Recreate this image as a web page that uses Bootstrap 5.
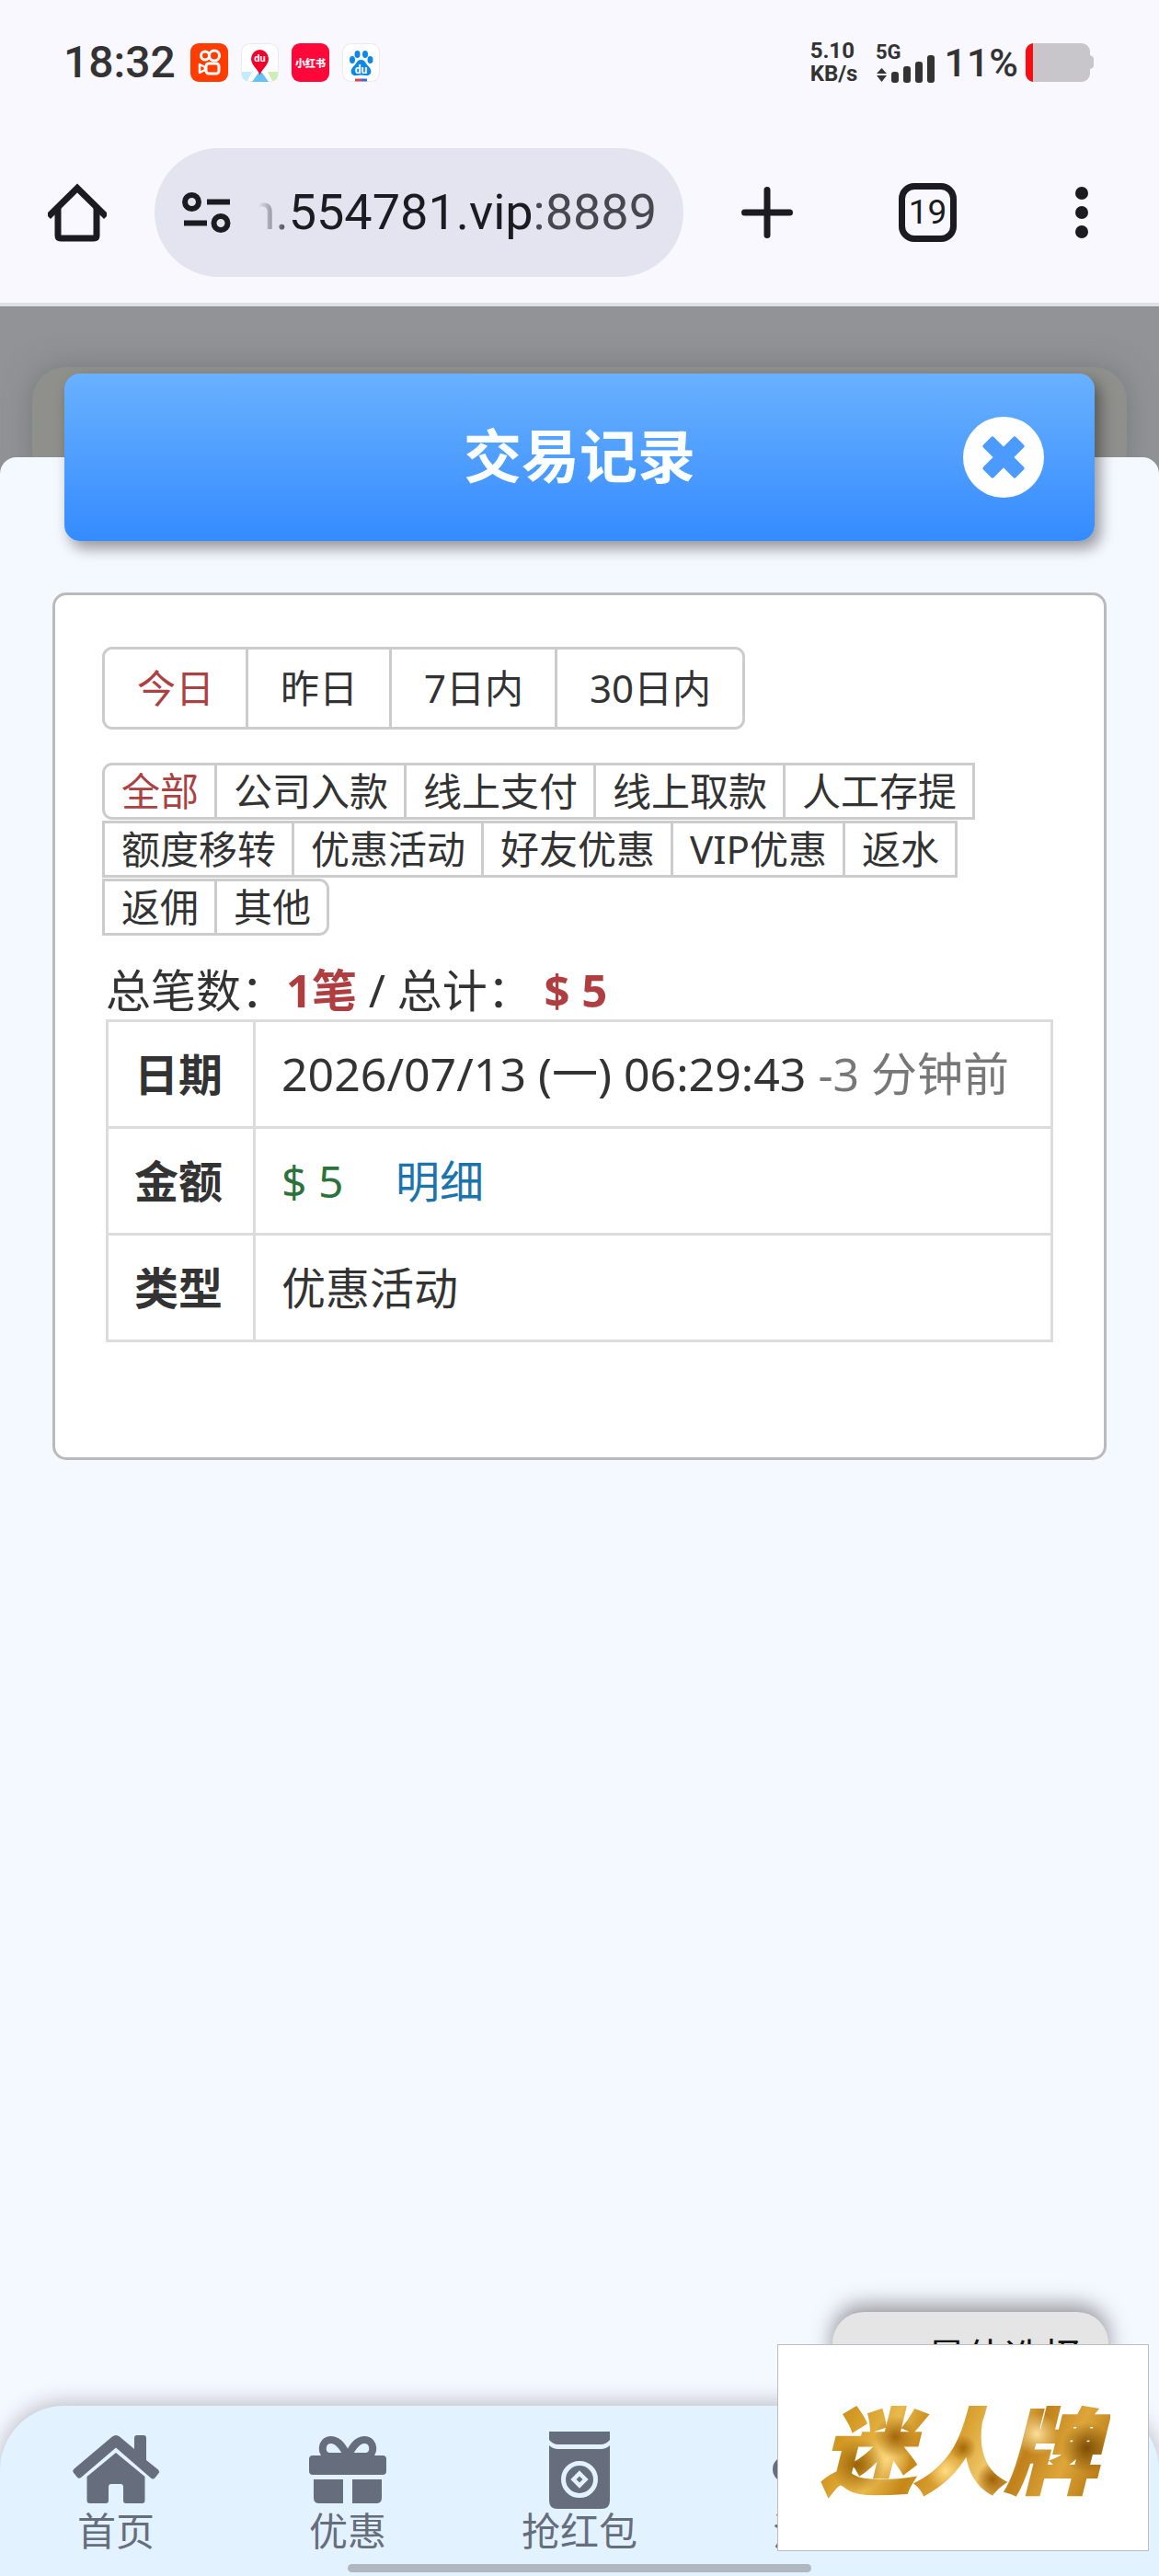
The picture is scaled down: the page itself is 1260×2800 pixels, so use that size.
<!DOCTYPE html>
<html lang="zh-CN">
<head>
<meta charset="utf-8">
<meta name="viewport" content="width=device-width, initial-scale=1">
<title>交易记录</title>
<link href="https://cdn.jsdelivr.net/npm/bootstrap@5.3.0/dist/css/bootstrap.min.css" rel="stylesheet">
<style>
  body { background: #f4f8ff; color: #333; font-family: "Noto Sans", "Noto Sans CJK SC", sans-serif; }
  svg { display: block; flex: none; }
  .chrome-area { background: #f9f8ff; border-bottom: 4px solid #e0dfe8; color: #1b1b21; }
  /* status bar */
  .status-bar { height: 136px; padding: 0 70px 0 69px; font-family: Roboto, "Noto Sans CJK SC", sans-serif; font-weight: 500; color: #333; }
  .clock { font-size: 48px; line-height: 48px; width: 138px; }
  .app-icons { gap: 14px; }
  .net-speed { font-size: 24px; line-height: 25px; font-weight: 700; }
  .battery-text { font-size: 43px; line-height: 48px; }
  /* browser toolbar */
  .tool-bar { padding: 25px 52px 28px; }
  .tool-bar .btn { width: 64px; height: 64px; }
  .address-pill { height: 140px; margin-left: 52px; padding: 0 29px 0 30px; border-radius: 70px; background: #e4e4f0; gap: 30px; min-width: 0; }
  .address-text { font-family: Roboto, sans-serif; font-size: 54px; line-height: 72px; color: #1b1b21; white-space: nowrap; -webkit-mask-image: linear-gradient(90deg, transparent, #000 40px); mask-image: linear-gradient(90deg, transparent, #000 40px); }
  .address-port { color: #474750; }
  .add-tab { margin-left: 59px; }
  .tab-count { margin-left: 111px; border: 7px solid #1b1b21; border-radius: 17px; font-family: Roboto, sans-serif; font-size: 37px; line-height: 48px; color: #1b1b21; }
  .more-menu { margin-left: 104px; }
  /* dimmed page and the sheet on top of it */
  .dimmed { background: #929397; }
  .dimmed-panel { top: 66px; left: 35px; right: 35px; height: 130px; border-radius: 36px; background: #8f8f8c; box-shadow: 0 0 32px rgba(90, 95, 100, .5); }
  .sheet { margin-top: 164px; border-radius: 18px 18px 0 0; background: #f4f8ff; }
  .banner { height: 182px; margin: -91px 70px 56px; padding: 0 55px; border-radius: 17px; background: linear-gradient(#69b1ff, #358bff); box-shadow: 6px 8px 16px rgba(0, 0, 0, .4); }
  .banner h1 { font-size: 63px; line-height: 72px; padding: 0 0 4px 88px; color: #fafeff; }
  /* record card */
  .record-card { margin: 0 57px; padding: 56px 51px 125px; border: 3px solid #b9babc; border-radius: 15px; }
  .seg { border: 3px solid #ccc; margin-right: -3px; background: #fff; color: #333; font-size: 42px; line-height: 56px; padding: 0 17px 0 18px; white-space: nowrap; }
  .seg.active { color: #ad4141; }
  .seg:first-child { border-radius: 11px 0 0 11px; }
  .seg:last-child { border-radius: 0 11px 11px 0; }
  .range-row .seg { padding: 14px 34px 14px 35px; }
  .type-row { margin-top: 36px; row-gap: 1px; }
  .summary { margin: 27px 4px 0; font-size: 49px; line-height: 64px; color: #333; }
  .summary strong { color: #b03e40; }
  .record-wrap { margin: 0 4px; }
  .record-table { font-size: 48px; line-height: 65px; color: #333; }
  .record-table th, .record-table td { border: 3px solid #dcdcdc; padding: 24px 28px; color: #333; }
  .record-table th { width: 160px; }
  .record-table .record-time { font-size: 50px; }
  .record-table .money { color: #2b733b; }
  .record-table .ago { color: #777; }
  .record-table a { color: #1c74ad; margin-left: 44px; }
  /* bottom navigation */
  .bottom-nav { border-radius: 70px 70px 0 0; background: #e3f2ff; box-shadow: 0 -4px 22px rgba(70, 60, 70, .3); color: #666d7c; }
  .bottom-nav a { color: #666d7c; font-size: 42px; line-height: 48px; padding-top: 28px; height: 172px; }
  .bottom-nav svg { height: 84px; }
  .gesture-bar { width: 504px; height: 9px; border-radius: 5px; background: #afb8c2; margin-bottom: 4px; }
  .best-btn { right: 55px; bottom: 187px; width: 300px; height: 100px; border: 0; border-radius: 34px 34px 0 0; background: #e5e5e5; box-shadow: 0 -8px 22px rgba(60, 60, 60, .5); font-size: 42px; line-height: 48px; color: #111; gap: 34px; }
  .ad-box { right: 11px; bottom: 27px; width: 404px; height: 225px; border: 1px solid #bcbcc2; background: #fff; }
  .ad-logo { font-family: "Noto Sans CJK SC", sans-serif; font-size: 100px; line-height: 150px; font-weight: 900; font-style: italic; padding: 0 14px 4px 6px; color: transparent; -webkit-background-clip: text; background-clip: text; -webkit-text-stroke: 3px transparent;
    background-image: radial-gradient(circle at 14% 62%, #9a6206 0, transparent 10%), radial-gradient(circle at 27% 42%, #a3660a 0, transparent 9%), radial-gradient(circle at 24% 58%, #f9d67e 0, transparent 10%), radial-gradient(circle at 50% 50%, #a5680a 0, transparent 8%), radial-gradient(circle at 44% 66%, #ffdc84 0, transparent 10%), radial-gradient(circle at 60% 72%, #a0620a 0, transparent 8%), radial-gradient(circle at 75% 40%, #fbe09a 0, transparent 9%), radial-gradient(circle at 92% 50%, #7d4e05 0, transparent 9%), linear-gradient(115deg, #b4780f, #d59a25 16%, #e9b94d 28%, #c68716 38%, #dda739 50%, #efc565 58%, #c0801a 68%, #dda63a 80%, #b87a14 92%, #d49a28); }
</style>
</head>
<body class="d-flex flex-column min-vh-100">

<header class="chrome-area">
  <div class="status-bar d-flex align-items-center">
    <span class="clock">18:32</span>
    <div class="app-icons d-flex">
      <svg width="41" height="42" viewBox="0 0 41 42"><rect width="41" height="42" rx="9" fill="#ff3d00"/><g fill="none" stroke="#fff" stroke-width="3"><circle cx="16" cy="13.500" r="4.500"/><circle cx="26" cy="13.500" r="5.500"/><rect x="17" y="22" width="14" height="11" rx="3"/><path d="M16 26l-6-3v9l6-3z" stroke-linejoin="round" stroke-width="2.500"/></g></svg>
      <svg width="41" height="42" viewBox="0 0 41 42"><rect x=".5" y=".5" width="40" height="41" rx="9" fill="#fff" stroke="#ebe8f0"/><path d="M1 31h11L7 41Q1 40 1 33z" fill="#c3ebfa"/><path d="M29 31h11v3q0 7-6 7z" fill="#cdeeb4"/><path d="M19 32h4l7 10H12z" fill="#63c3f2"/><path d="M20.500 35c-1-6-9.500-11-9.500-18a9.500 10 0 0 1 19 0c0 7-8.500 12-9.500 18z" fill="#f5002d"/><text x="20.500" y="20" font-size="11" font-weight="700" fill="#fff" text-anchor="middle">du</text></svg>
      <svg width="41" height="42" viewBox="0 0 41 42"><rect width="41" height="42" rx="9" fill="#ff0839"/><text x="20.500" y="26" font-size="11" font-weight="900" fill="#fff" text-anchor="middle">小红书</text></svg>
      <svg width="41" height="42" viewBox="0 0 41 42"><rect x=".5" y=".5" width="40" height="41" rx="9" fill="#fff" stroke="#ebe8f0"/><g fill="#0d87e8"><ellipse cx="11" cy="18" rx="3" ry="4"/><ellipse cx="16.500" cy="12" rx="3" ry="4"/><ellipse cx="25" cy="12" rx="3" ry="4"/><ellipse cx="30.500" cy="18" rx="3" ry="4"/><path d="M20.500 18c5 0 5 5 9 8 4 5 1 10-4 9q-5-1-10 0c-5 1-8-4-4-9 4-3 4-8 9-8z"/></g><text x="20.500" y="33" font-size="12" font-weight="700" fill="#fff" text-anchor="middle">du</text><path d="M14 40h7" stroke="#e0435a" stroke-width="3"/><path d="M21 40h6" stroke="#3570d0" stroke-width="3"/></svg>
    </div>
    <div class="net-speed ms-auto me-3 pe-1">5.10<br>KB/s</div>
    <svg class="me-2" width="66" height="50" viewBox="0 -3 66 50" fill="#333"><text x="0" y="18" font-size="22" font-weight="700">5G</text><path d="M1 34l5.500-6 5.500 6zM1 36l5.500 7L12 36z"/><rect x="17" y="32" width="8" height="12" rx="3"/><rect x="30" y="26" width="8" height="18" rx="3"/><rect x="43" y="21" width="8" height="23" rx="3"/><rect x="56" y="14" width="8" height="30" rx="3"/></svg>
    <span class="battery-text me-2">11%</span>
    <svg width="75" height="42" viewBox="0 0 75 42"><path d="M9 0h52a9 9 0 0 1 9 9v4q4 1 4 4v7q0 3-4 4v5a9 9 0 0 1-9 9H9a9 9 0 0 1-9-9V9a9 9 0 0 1 9-9z" fill="#c8c5cb"/><path d="M8 0v42a9 9 0 0 1-8-9V9a9 9 0 0 1 8-9z" fill="#fb0b12"/></svg>
  </div>

  <div class="tool-bar d-flex align-items-center">
    <button type="button" class="btn p-0 border-0" aria-label="主页"><svg width="64" height="64" viewBox="0 0 64 64" fill="none" stroke="#1b1b21" stroke-width="7" stroke-linejoin="round"><path d="M3 33L32 4.500 61 33" stroke-linecap="square" stroke-linejoin="miter" transform="translate(0 1)"/><path d="M11 27v30q0 3 3 3h36q3 0 3-3V27"/></svg></button>
    <button type="button" class="address-pill border-0 d-flex align-items-center flex-grow-1">
      <svg width="53" height="44" viewBox="0 0 53 44" fill="none" stroke="#1b1b21" stroke-width="6"><circle cx="10.500" cy="10.500" r="7.500"/><path d="M27 10.500h25M2 33.500h25"/><circle cx="42" cy="33.500" r="7.500"/></svg>
      <span class="address-text d-flex justify-content-end flex-grow-1 overflow-hidden"><span>n.554781.vip<span class="address-port">:8889</span></span></span>
    </button>
    <button type="button" class="btn add-tab p-0 border-0" aria-label="新建标签页"><svg width="64" height="64" viewBox="0 0 64 64" stroke="#1b1b21" stroke-width="7" stroke-linecap="round"><path d="M32 7.500v49M7.500 32h49"/></svg></button>
    <button type="button" class="btn tab-count p-0">19</button>
    <button type="button" class="btn more-menu p-0 border-0" aria-label="更多"><svg width="64" height="64" viewBox="0 0 64 64" fill="#1b1b21"><circle cx="32" cy="11" r="7"/><circle cx="32" cy="32" r="7"/><circle cx="32" cy="53" r="7"/></svg></button>
  </div>
</header>

<main class="dimmed position-relative flex-grow-1 d-flex flex-column overflow-hidden">
  <div class="dimmed-panel position-absolute"></div>
  <section class="sheet position-relative flex-grow-1 d-flex flex-column">
    <div class="banner d-flex align-items-center">
      <h1 class="flex-grow-1 text-center fw-bold mb-0">交易记录</h1>
      <button type="button" class="btn p-0 border-0" aria-label="关闭"><svg width="88" height="88" viewBox="0 0 88 88"><circle cx="44" cy="44" r="44" fill="#fff"/><g fill="#4b9bff"><rect x="19" y="36" width="50" height="16" rx="2" transform="rotate(45 44 44)"/><rect x="19" y="36" width="50" height="16" rx="2" transform="rotate(-45 44 44)"/></g></svg></button>
    </div>

    <div class="record-card bg-white">
      <div class="range-row d-flex flex-wrap">
        <button type="button" class="seg active">今日</button>
        <button type="button" class="seg">昨日</button>
        <button type="button" class="seg">7日内</button>
        <button type="button" class="seg">30日内</button>
      </div>
      <div class="type-row d-flex flex-wrap">
        <button type="button" class="seg active">全部</button>
        <button type="button" class="seg">公司入款</button>
        <button type="button" class="seg">线上支付</button>
        <button type="button" class="seg">线上取款</button>
        <button type="button" class="seg">人工存提</button>
        <button type="button" class="seg">额度移转</button>
        <button type="button" class="seg">优惠活动</button>
        <button type="button" class="seg">好友优惠</button>
        <button type="button" class="seg">VIP优惠</button>
        <button type="button" class="seg">返水</button>
        <button type="button" class="seg">返佣</button>
        <button type="button" class="seg">其他</button>
      </div>
      <p class="summary">总笔数：<strong>1笔</strong> / 总计： <strong>$ 5</strong></p>
      <div class="record-wrap">
        <table class="record-table table mb-0">
          <tbody>
            <tr><th scope="row">日期</th><td class="record-time">2026/07/13 (一) 06:29:43 <span class="ago">-3 分钟前</span></td></tr>
            <tr><th scope="row">金额</th><td><span class="money">$ 5</span> <a href="#" class="text-decoration-none">明细</a></td></tr>
            <tr><th scope="row">类型</th><td>优惠活动</td></tr>
          </tbody>
        </table>
      </div>
    </div>
  </section>
</main>

<footer class="bottom-nav position-relative">
  <button type="button" class="best-btn position-absolute d-flex justify-content-center align-items-start">
    <svg class="mt-4" width="40" height="60" viewBox="0 0 40 60"><path d="M27 8l9 18-9 9-9-9z" fill="#111"/></svg>
    <span class="mt-4">最佳选择</span>
  </button>
  <nav class="row row-cols-5 g-0">
    <a href="#" class="col d-flex flex-column align-items-center text-decoration-none">
      <svg width="96" height="84" viewBox="0 0 96 84" fill="#666d7c"><path d="M44 5.500q4-3 8 0L68 19V7q0-3 3-3h7q3 0 3 3v24l13 10.500q2 2 .3 4l-4 5q-2 2-4 .3L48 17.500 10 50q-2 1.500-4-.3l-4-5q-1.700-2 .3-4z"/><path d="M48 23l31.500 26v26q0 3-3 3H59q-3 0-3-3V60q0-3-3-3H43q-3 0-3 3v15q0 3-3 3H19.500q-3 0-3-3V49z"/></svg>
      首页
    </a>
    <a href="#" class="col d-flex flex-column align-items-center text-decoration-none">
      <svg width="84" height="84" viewBox="0 0 84 84"><path d="M42 27C37 17 32 9 24 9c-12 0-12 18-2 18zM42 27C47 17 52 9 60 9c12 0 12 18 2 18z" fill="none" stroke="#666d7c" stroke-width="8"/><path d="M4 26h76q4 0 4 4v13q0 4-4 4H4q-4 0-4-4V30q0-4 4-4zM5 52h32v26H11q-6 0-6-6zM47 52h32v20q0 6-6 6H47z" fill="#666d7c"/></svg>
      优惠
    </a>
    <a href="#" class="col d-flex flex-column align-items-center text-decoration-none">
      <svg width="66" height="84" viewBox="0 0 66 84"><path d="M0 0h66v9q-4 5-10 5H10Q4 14 0 9zM0 15q4 4 10 4h46q6 0 10-4v60q0 9-9 9H9q-9 0-9-9z" fill="#666d7c"/><circle cx="33" cy="52" r="17.500" fill="none" stroke="#e3f2ff" stroke-width="5"/><path d="M33 45.500l6.500 6.500-6.500 6.500-6.500-6.500z" fill="none" stroke="#e3f2ff" stroke-width="4.500"/></svg>
      抢红包
    </a>
    <a href="#" class="col d-flex flex-column align-items-center text-decoration-none">
      <svg width="84" height="84" viewBox="0 0 84 84" fill="#666d7c"><circle cx="14" cy="41" r="14"/><circle cx="42" cy="24" r="17"/><circle cx="70" cy="41" r="14"/></svg>
      活动
    </a>
  </nav>
  <div class="gesture-bar mx-auto"></div>
  <div class="ad-box position-absolute d-flex justify-content-center align-items-center">
    <span class="ad-logo">迷人牌</span>
  </div>
</footer>

<script src="https://cdn.jsdelivr.net/npm/bootstrap@5.3.0/dist/js/bootstrap.bundle.min.js"></script>
</body>
</html>
